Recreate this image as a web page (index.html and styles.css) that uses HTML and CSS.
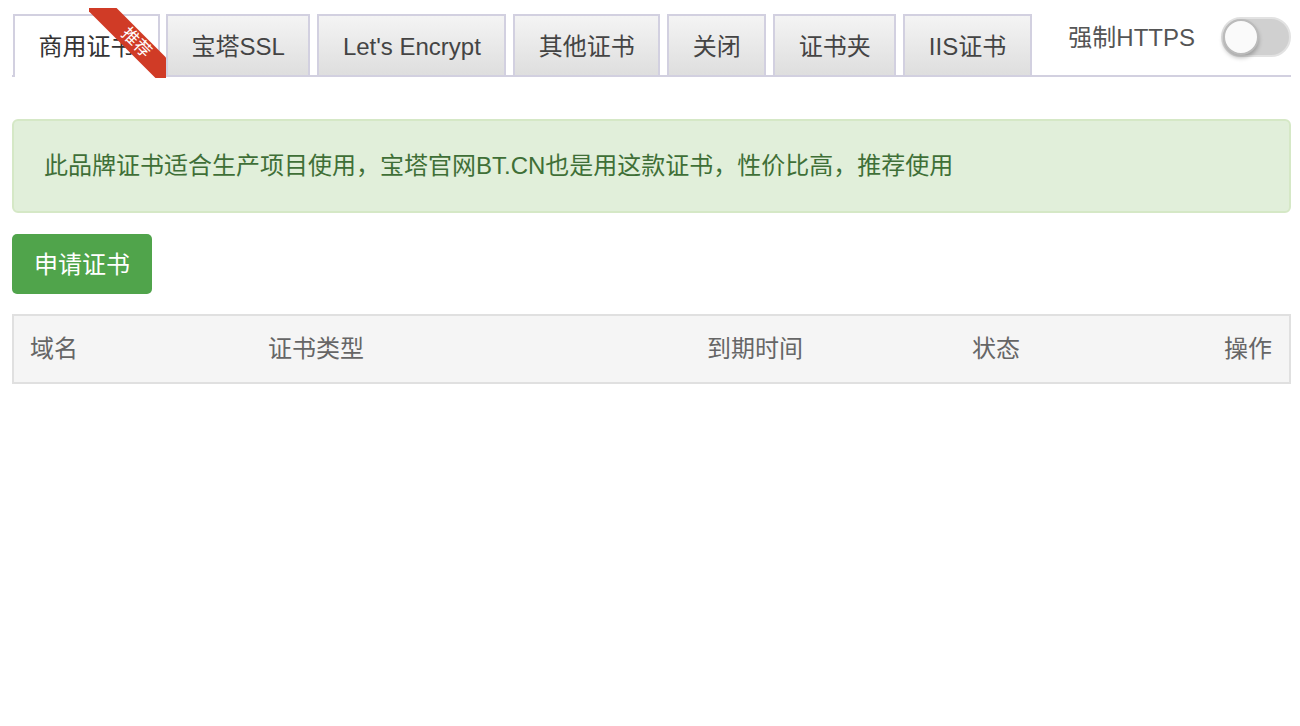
FILE: index.html
```html
<!DOCTYPE html>
<html lang="zh-CN">
  <head>
    <meta charset="UTF-8">
    <meta name="viewport" content="width=device-width">
    <title>SSL</title>
    <link rel="stylesheet" href="styles.css">
  </head>
  <body>
    <div class="wrap">
      <div class="tabs">
        <span class="tab on">商用证书<span class="ribbon"><i>推荐</i></span></span>
        <span class="tab">宝塔SSL</span>
        <span class="tab">Let's Encrypt</span>
        <span class="tab">其他证书</span>
        <span class="tab">关闭</span>
        <span class="tab">证书夹</span>
        <span class="tab">IIS证书</span>
        <div class="force">
          <span class="force-label">强制HTTPS</span>
          <label class="switch"><span class="knob"></span></label>
        </div>
      </div>

      <div class="alert">此品牌证书适合生产项目使用，宝塔官网BT.CN也是用这款证书，性价比高，推荐使用</div>

      <button type="button" class="btn">申请证书</button>

      <table class="list">
        <thead>
          <tr>
            <th class="c1">域名</th>
            <th class="c2">证书类型</th>
            <th class="c3">到期时间</th>
            <th class="c4">状态</th>
            <th class="c5">操作</th>
          </tr>
        </thead>
      </table>
    </div>
  </body>
</html>
```

FILE: styles.css
```css
html {
  font-family: "Liberation Sans", "Noto Sans CJK SC", sans-serif;
  font-size: 24px;
  color: #333;
}
body {
  margin: 0;
}
.wrap {
  padding: 14px 9px 0 12px;
}
.tabs {
  display: flex;
  align-items: flex-start;
  gap: 7px;
  padding-left: 1px;
  border-bottom: 2px solid #d2d0e0;
}
.tab {
  position: relative;
  box-sizing: border-box;
  height: 61px;
  padding: 0 23.5px;
  line-height: 62px;
  color: #444;
  border: 2px solid #d2d0e0;
  border-bottom: 0;
  background: linear-gradient(#f4f4f4, #dedede);
  white-space: nowrap;
}
.tab.on {
  height: 63px;
  margin-bottom: -2px;
  margin-right: -1px;
  background: #fff;
  color: #333;
}
.ribbon {
  position: absolute;
  top: -8px;
  right: -8px;
  width: 77px;
  height: 70px;
  overflow: hidden;
  pointer-events: none;
}
.ribbon i {
  position: absolute;
  left: -13px;
  top: 24px;
  width: 120px;
  height: 22px;
  line-height: 22px;
  background: #d03b26;
  color: #fff;
  font-style: normal;
  font-size: 17px;
  text-align: center;
  transform: rotate(45deg);
}
.force {
  margin-left: auto;
  display: flex;
  align-items: center;
  gap: 26px;
  height: 40px;
  padding-top: 3px;
  color: #555;
}
.force-label {
  margin-top: -4px;
}
.switch {
  position: relative;
  box-sizing: border-box;
  width: 70px;
  height: 40px;
  border-radius: 20px;
  background: #d0d0d0;
  border: 2px solid #e2e2e2;
}
.knob {
  position: absolute;
  left: 0;
  top: 0;
  box-sizing: border-box;
  width: 36px;
  height: 36px;
  border-radius: 50%;
  background: #fafafa;
  border: 2px solid #bbb;
  box-shadow: 0 3px 4px rgba(0, 0, 0, .25);
}
.alert {
  margin-top: 42px;
  padding: 31px 30px;
  line-height: 28px;
  color: #3f6f37;
  background: #e1efda;
  border: 2px solid #d5e8c6;
  border-radius: 6px;
}
.btn {
  display: block;
  margin-top: 21px;
  width: 140px;
  height: 60px;
  padding: 0 0 3px;
  font: inherit;
  color: #fff;
  background: #50a44b;
  border: 0;
  border-radius: 5px;
}
.list {
  margin-top: 20px;
  width: 100%;
  border-collapse: collapse;
  border: 2px solid #e0e0e0;
  background: #f5f5f5;
}
.list th {
  box-sizing: border-box;
  height: 68px;
  padding: 0 16px 6px;
  font-weight: normal;
  color: #666;
  text-align: left;
}
.list .c1 { width: 239px; }
.list .c2 { width: 439px; }
.list .c3 { width: 265px; }
.list .c5 { text-align: right; padding-right: 17px; }
```
